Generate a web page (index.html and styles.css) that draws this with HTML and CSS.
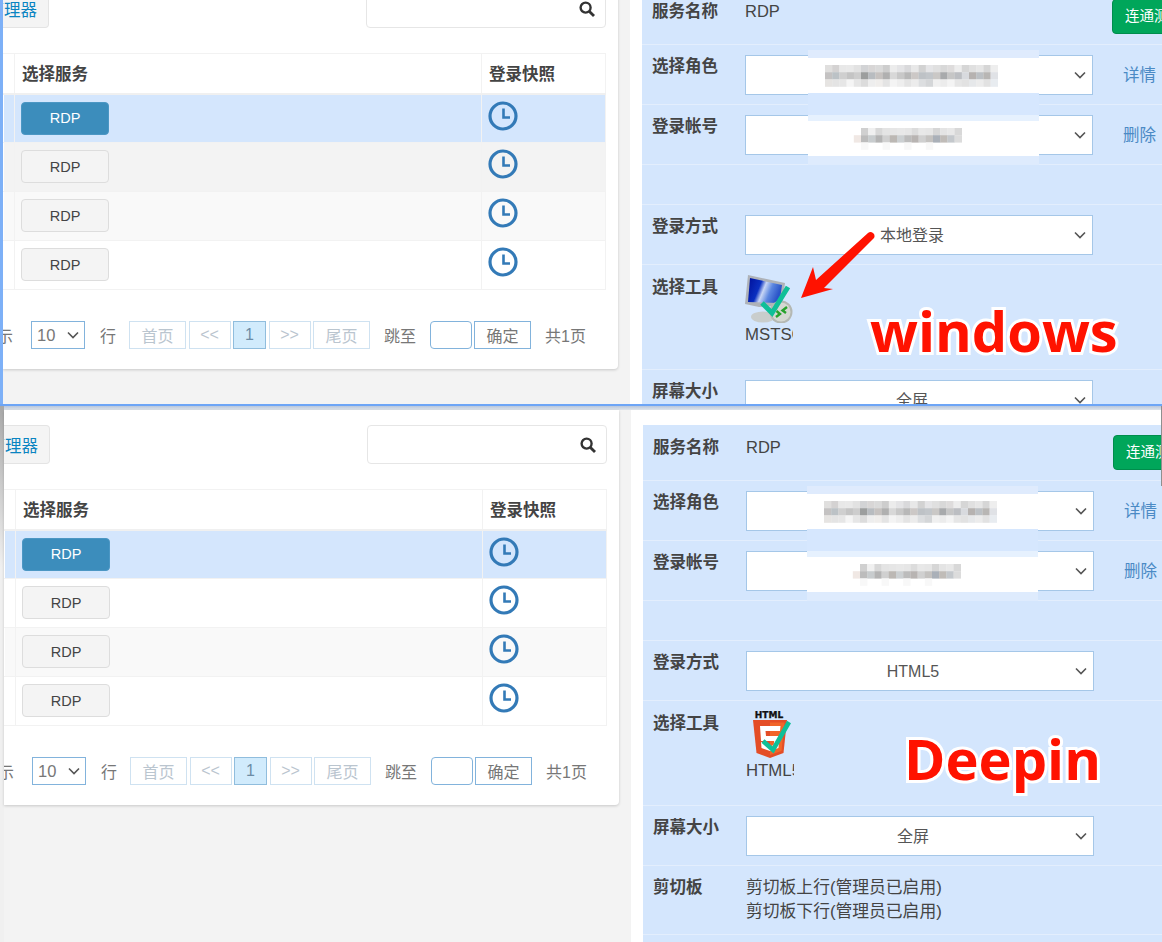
FILE: index.html
```html
<!DOCTYPE html>
<html lang="zh-CN">
<head>
    <meta charset="UTF-8">
    <meta name="viewport" content="width=device-width, initial-scale=1.0">
    <title>RDP 登录</title>
    <link rel="stylesheet" href="styles.css">
</head>
<body>

    <!-- shared icons -->
    <svg class="defs" aria-hidden="true">
        <symbol id="clock" viewBox="0 0 30 30">
            <circle cx="15" cy="15" r="13" fill="none" stroke="#337ab7" stroke-width="3.2"/>
            <path d="M15.5 7.5V16.5H22" fill="none" stroke="#337ab7" stroke-width="2.6"/>
        </symbol>
        <symbol id="search" viewBox="0 0 16 16">
            <circle cx="6.6" cy="6.6" r="5" fill="none" stroke="#333" stroke-width="2.4"/>
            <path d="M10.4 10.4L15 15" fill="none" stroke="#333" stroke-width="2.8"/>
        </symbol>
        <symbol id="patch" viewBox="0 0 231 115">
            <rect class="band" y="0" height="8" fill="#dfebfd"/>
            <rect class="band" y="8" height="35" fill="#fff"/>
            <rect class="band" y="43" height="22" fill="#d6e7fe"/>
            <rect class="band" y="65" height="6" fill="#e6f1fe"/>
            <rect class="band" y="71" height="35" fill="#fff"/>
            <rect class="band" y="106" height="9" fill="#deebfd"/>
            <g class="mosaic">
                <rect x="17" y="15" fill="#e0dfde"/><rect x="24.2" y="15" fill="#d4d2d2"/><rect x="31.4" y="15" fill="#e8e8e8"/><rect x="38.6" y="15" fill="#e9e9e9"/><rect x="45.8" y="15" fill="#e2e2e2"/><rect x="53" y="15" fill="#d2d3d5"/><rect x="60.2" y="15" fill="#d8d6d6"/><rect x="67.4" y="15" fill="#dadada"/><rect x="74.6" y="15" fill="#cdcdcd"/><rect x="81.8" y="15" fill="#ececec"/><rect x="89" y="15" fill="#e4e4e6"/><rect x="96.2" y="15" fill="#d9d9db"/><rect x="103.4" y="15" fill="#e8e8e8"/><rect x="110.6" y="15" fill="#d2d2d2"/><rect x="117.8" y="15" fill="#e5e5e7"/><rect x="125" y="15" fill="#e0e0e0"/><rect x="132.2" y="15" fill="#d8d8d8"/><rect x="139.4" y="15" fill="#dedcdc"/><rect x="146.6" y="15" fill="#ededed"/><rect x="153.8" y="15" fill="#d6d6d6"/><rect x="161" y="15" fill="#e0e0e0"/><rect x="168.2" y="15" fill="#e6e6e6"/><rect x="175.4" y="15" fill="#d6d6d6"/><rect x="182.6" y="15" fill="#eeeeee"/>
                <rect x="17" y="22.2" fill="#c4c2c2"/><rect x="24.2" y="22.2" fill="#bcc2c6"/><rect x="31.4" y="22.2" fill="#cfcfcf"/><rect x="38.6" y="22.2" fill="#c4c4c4"/><rect x="45.8" y="22.2" fill="#cdcdcd"/><rect x="53" y="22.2" fill="#9c9e9e"/><rect x="60.2" y="22.2" fill="#b8bcc0"/><rect x="67.4" y="22.2" fill="#c6c2c0"/><rect x="74.6" y="22.2" fill="#b0b0b0"/><rect x="81.8" y="22.2" fill="#d8d8d8"/><rect x="89" y="22.2" fill="#c8c8c8"/><rect x="96.2" y="22.2" fill="#b8b8b8"/><rect x="103.4" y="22.2" fill="#ccc8c6"/><rect x="110.6" y="22.2" fill="#bec2c6"/><rect x="117.8" y="22.2" fill="#c2c6ca"/><rect x="125" y="22.2" fill="#cac8c6"/><rect x="132.2" y="22.2" fill="#a8aaac"/><rect x="139.4" y="22.2" fill="#c6c6c6"/><rect x="146.6" y="22.2" fill="#bcbec2"/><rect x="153.8" y="22.2" fill="#d8dade"/><rect x="161" y="22.2" fill="#b6b2b0"/><rect x="168.2" y="22.2" fill="#bcc0c4"/><rect x="175.4" y="22.2" fill="#b8b6b4"/><rect x="182.6" y="22.2" fill="#e0e2e6"/>
                <rect x="17" y="29.4" fill="#e6e4e2"/><rect x="24.2" y="29.4" fill="#e4e4e4"/><rect x="31.4" y="29.4" fill="#e6e6e6"/><rect x="38.6" y="29.4" fill="#f5f5f5"/><rect x="45.8" y="29.4" fill="#e6e6e6"/><rect x="53" y="29.4" fill="#dcdcdc"/><rect x="60.2" y="29.4" fill="#eeeeee"/><rect x="67.4" y="29.4" fill="#f0eeec"/><rect x="74.6" y="29.4" fill="#e4e4e4"/><rect x="81.8" y="29.4" fill="#f4f4f4"/><rect x="89" y="29.4" fill="#eeeeee"/><rect x="96.2" y="29.4" fill="#e4e4e4"/><rect x="103.4" y="29.4" fill="#ececec"/><rect x="110.6" y="29.4" fill="#dcdee0"/><rect x="117.8" y="29.4" fill="#d4d6d8"/><rect x="125" y="29.4" fill="#f0f0f0"/><rect x="132.2" y="29.4" fill="#ececec"/><rect x="139.4" y="29.4" fill="#f4f4f4"/><rect x="146.6" y="29.4" fill="#e6e6e6"/><rect x="153.8" y="29.4" fill="#e2e2e2"/><rect x="161" y="29.4" fill="#e6e8ea"/><rect x="168.2" y="29.4" fill="#ececec"/><rect x="175.4" y="29.4" fill="#e2e2e2"/><rect x="182.6" y="29.4" fill="#e8ecf0"/>
                <rect x="53" y="78" fill="#d0d0d0"/><rect x="60.2" y="78" fill="#f0f0f0"/><rect x="67.4" y="78" fill="#d8d8d8"/><rect x="74.6" y="78" fill="#e4e4e4"/><rect x="81.8" y="78" fill="#e6e6e6"/><rect x="89" y="78" fill="#e8e8e8"/><rect x="96.2" y="78" fill="#e6e6e6"/><rect x="103.4" y="78" fill="#dcdcdc"/><rect x="110.6" y="78" fill="#e8e8e8"/><rect x="117.8" y="78" fill="#e6e6e6"/><rect x="125" y="78" fill="#d6d6d6"/><rect x="132.2" y="78" fill="#e4e4e4"/><rect x="139.4" y="78" fill="#e8e8e8"/><rect x="146.6" y="78" fill="#d8d8d8"/>
                <rect x="45.8" y="85.2" fill="#f0e8e4"/><rect x="53" y="85.2" fill="#bcbcbc"/><rect x="60.2" y="85.2" fill="#c8ccce"/><rect x="67.4" y="85.2" fill="#b4b4b4"/><rect x="74.6" y="85.2" fill="#d0d0d0"/><rect x="81.8" y="85.2" fill="#bcb8b4"/><rect x="89" y="85.2" fill="#ccd0d2"/><rect x="96.2" y="85.2" fill="#bcbcbc"/><rect x="103.4" y="85.2" fill="#b8b4b2"/><rect x="110.6" y="85.2" fill="#d0d0d0"/><rect x="117.8" y="85.2" fill="#c4c2c0"/><rect x="125" y="85.2" fill="#aab0b8"/><rect x="132.2" y="85.2" fill="#c0bcb8"/><rect x="139.4" y="85.2" fill="#c4c8cc"/><rect x="146.6" y="85.2" fill="#dcdcdc"/>
                <rect x="53" y="92.4" fill="#f8f8f8"/><rect x="74.6" y="92.4" fill="#f8f8f8"/><rect x="96.2" y="92.4" fill="#f8f8f8"/><rect x="117.8" y="92.4" fill="#f8f8f8"/>
            </g>
        </symbol>
    </svg>

    <!-- Windows screenshot -->
    <section class="shot shot-top">
        <div class="shot-inner">
            <div class="titlebar"></div>
            <div class="panes">
                <div class="left-pane">
                    <div class="toolbar">
                        <button class="file-btn">文件管理器</button>
                        <div class="search-box"><svg class="search-icon"><use href="#search"/></svg></div>
                    </div>
                    <table class="service-table">
                        <thead>
                            <tr><th class="col-check"></th><th>选择服务</th><th class="col-snap">登录快照</th></tr>
                        </thead>
                        <tbody>
                            <tr class="selected"><td></td><td><button class="rdp-btn active">RDP</button></td><td class="snap"><svg class="clock"><use href="#clock"/></svg></td></tr>
                            <tr class="grey"><td></td><td><button class="rdp-btn">RDP</button></td><td class="snap"><svg class="clock"><use href="#clock"/></svg></td></tr>
                            <tr class="stripe"><td></td><td><button class="rdp-btn">RDP</button></td><td class="snap"><svg class="clock"><use href="#clock"/></svg></td></tr>
                            <tr><td></td><td><button class="rdp-btn">RDP</button></td><td class="snap"><svg class="clock"><use href="#clock"/></svg></td></tr>
                        </tbody>
                    </table>
                    <div class="pager">
                        <span class="pager-text cut">显示</span>
                        <select class="page-size"><option>10</option></select>
                        <span class="pager-text row-word">行</span>
                        <a class="page-link wide off">首页</a>
                        <a class="page-link off">&lt;&lt;</a>
                        <a class="page-link num current">1</a>
                        <a class="page-link off">&gt;&gt;</a>
                        <a class="page-link wide off">尾页</a>
                        <span class="pager-text jump">跳至</span>
                        <input class="page-input" type="text">
                        <a class="page-link wide go">确定</a>
                        <span class="pager-text total">共1页</span>
                    </div>
                </div>
                <div class="right-pane">
                    <div class="form-card">
                        <div class="row row-name">
                            <div class="label">服务名称</div>
                            <div class="value name-value">RDP</div>
                            <button class="test-btn">连通测试</button>
                        </div>
                        <div class="row">
                            <div class="label">选择角色</div>
                            <select class="field"><option></option></select>
                            <a class="side-link">详情</a>
                        </div>
                        <div class="row">
                            <div class="label">登录帐号</div>
                            <select class="field"><option></option></select>
                            <a class="side-link">删除</a>
                        </div>
                        <div class="row row-empty"></div>
                        <div class="row">
                            <div class="label">登录方式</div>
                            <select class="field"><option>本地登录</option></select>
                        </div>
                        <div class="row row-tool">
                            <div class="label">选择工具</div>
                            <div class="tool">
                                <svg class="tool-icon" viewBox="0 0 48 48">
                                    <defs>
                                        <linearGradient id="screen" x1="0" y1="0" x2="1" y2="0.3">
                                            <stop offset="0" stop-color="#00109a"/>
                                            <stop offset="0.4" stop-color="#0a2fc0"/>
                                            <stop offset="0.55" stop-color="#c8d6f5"/>
                                            <stop offset="0.75" stop-color="#5b86e0"/>
                                            <stop offset="1" stop-color="#2a55c8"/>
                                        </linearGradient>
                                    </defs>
                                    <ellipse cx="18" cy="42" rx="12" ry="5.5" fill="#c9cdcc"/>
                                    <path d="M3 0L40 8L37 31L14 32L0 29Z" fill="#aeb2b8"/>
                                    <path d="M5 3L37 10L34.5 28L3 27Z" fill="url(#screen)"/>
                                    <circle cx="36" cy="37" r="11.5" fill="#b4b8b3"/>
                                    <circle cx="36" cy="37" r="9.5" fill="#d5d8d2"/>
                                    <path d="M31 42L35 39L31.5 36M42 32L37.5 35.5L41 38" fill="none" stroke="#27a22c" stroke-width="2.4"/>
                                    <path d="M17 28L27 38L43 12" fill="none" stroke="#0fbf98" stroke-width="5"/>
                                </svg>
                                <div class="tool-name">MSTSC</div>
                            </div>
                        </div>
                        <div class="row">
                            <div class="label">屏幕大小</div>
                            <select class="field"><option>全屏</option></select>
                        </div>
                        <svg class="patch patch-top"><use href="#patch"/></svg>
                        <svg class="arrow" viewBox="0 0 80 72">
                            <path d="M1 72L13 41L16 54L68 7A4 4 0 0 1 74 12L24 62L33 63Z" fill="#ff1200"/>
                        </svg>
                        <div class="os-word os-windows">windows</div>
                    </div>
                </div>
            </div>
        </div>
    </section>

    <!-- Deepin screenshot -->
    <section class="shot shot-bottom">
        <div class="shot-inner">
            <div class="titlebar"></div>
            <div class="panes">
                <div class="left-pane">
                    <div class="toolbar">
                        <button class="file-btn">文件管理器</button>
                        <div class="search-box"><svg class="search-icon"><use href="#search"/></svg></div>
                    </div>
                    <table class="service-table">
                        <thead>
                            <tr><th class="col-check"></th><th>选择服务</th><th class="col-snap">登录快照</th></tr>
                        </thead>
                        <tbody>
                            <tr class="selected"><td></td><td><button class="rdp-btn active">RDP</button></td><td class="snap"><svg class="clock"><use href="#clock"/></svg></td></tr>
                            <tr><td></td><td><button class="rdp-btn">RDP</button></td><td class="snap"><svg class="clock"><use href="#clock"/></svg></td></tr>
                            <tr class="stripe"><td></td><td><button class="rdp-btn">RDP</button></td><td class="snap"><svg class="clock"><use href="#clock"/></svg></td></tr>
                            <tr><td></td><td><button class="rdp-btn">RDP</button></td><td class="snap"><svg class="clock"><use href="#clock"/></svg></td></tr>
                        </tbody>
                    </table>
                    <div class="pager">
                        <span class="pager-text cut">显示</span>
                        <select class="page-size"><option>10</option></select>
                        <span class="pager-text row-word">行</span>
                        <a class="page-link wide off">首页</a>
                        <a class="page-link off">&lt;&lt;</a>
                        <a class="page-link num current">1</a>
                        <a class="page-link off">&gt;&gt;</a>
                        <a class="page-link wide off">尾页</a>
                        <span class="pager-text jump">跳至</span>
                        <input class="page-input" type="text">
                        <a class="page-link wide go">确定</a>
                        <span class="pager-text total">共1页</span>
                    </div>
                </div>
                <div class="right-pane">
                    <div class="form-card">
                        <div class="row row-name">
                            <div class="label">服务名称</div>
                            <div class="value name-value">RDP</div>
                            <button class="test-btn">连通测试</button>
                        </div>
                        <div class="row">
                            <div class="label">选择角色</div>
                            <select class="field"><option></option></select>
                            <a class="side-link">详情</a>
                        </div>
                        <div class="row">
                            <div class="label">登录帐号</div>
                            <select class="field"><option></option></select>
                            <a class="side-link">删除</a>
                        </div>
                        <div class="row row-empty"></div>
                        <div class="row">
                            <div class="label">登录方式</div>
                            <select class="field"><option>HTML5</option></select>
                        </div>
                        <div class="row row-tool">
                            <div class="label">选择工具</div>
                            <div class="tool">
                                <svg class="tool-icon" viewBox="0 0 48 48">
                                    <text class="html-word" x="23" y="7" text-anchor="middle">HTML</text>
                                    <path d="M7 9H41L37.5 42L24 47L10.5 42Z" fill="#e44d26"/>
                                    <path d="M24 11.5H38.5L35.5 40L24 44Z" fill="#f16529"/>
                                    <path d="M14 15H34.5L34 20H19.5L20 25H33.5L32.5 37L24 40L15.5 37L15 31H20L20.3 34L24 35.5L27.7 34L28.2 30H15Z" fill="#fff"/>
                                    <path d="M17 30L27 39L43 11" fill="none" stroke="#0fbf98" stroke-width="4.6"/>
                                </svg>
                                <div class="tool-name">HTML5</div>
                            </div>
                        </div>
                        <div class="row">
                            <div class="label">屏幕大小</div>
                            <select class="field"><option>全屏</option></select>
                        </div>
                        <div class="row row-clip">
                            <div class="label">剪切板</div>
                            <div class="value clip-value">
                                <div>剪切板上行(管理员已启用)</div>
                                <div>剪切板下行(管理员已启用)</div>
                            </div>
                        </div>
                        <svg class="patch patch-bottom"><use href="#patch"/></svg>
                        <div class="os-word os-deepin">Deepin</div>
                    </div>
                </div>
            </div>
        </div>
    </section>

</body>
</html>
```

FILE: styles.css
```css
* {
    box-sizing: border-box;
}

html, body {
    margin: 0;
    padding: 0;
    height: 942px;
    overflow: hidden;
}

body {
    font-family: "Liberation Sans", "Noto Sans CJK SC", sans-serif;
    font-size: 16px;
    color: #444;
    background-color: #f3f3f3;
}

.defs {
    position: absolute;
    width: 0;
    height: 0;
}

.band {
    width: 231px;
}

.mosaic {
    filter: blur(0.4px);
}

.mosaic rect {
    width: 7.4px;
    height: 7.4px;
}

/* One pasted screenshot */
.shot {
    overflow: hidden;
    background-color: #f3f3f3;
}

.shot-inner {
    background-color: #f3f3f3;
}

.shot-top {
    height: 404px;
    border-left: 3px solid #7db0f7;
}

.shot-top .shot-inner {
    margin-top: -30px;
}

.shot-bottom {
    position: relative;
    height: 538px;
    padding-left: 4px;
    border-top: 2px solid #6da5f6;
    background: linear-gradient(#a8a8a8, #f0f0f0 30%);
}

/* thin dark edge of the pasted picture */
.shot-bottom::after {
    content: "";
    position: absolute;
    right: 0;
    top: 0;
    width: 1px;
    height: 80px;
    background-color: #8f8f8f;
}

.shot-bottom .shot-inner {
    height: 100%;
}

.titlebar {
    height: 4px;
    background: linear-gradient(#b9c7dc, #dfe4ea);
}

.panes {
    display: flex;
    width: 1200px;
}

/* Left side: service table */
.left-pane {
    width: 615px;
    height: 395px;
    padding: 15px 12px 0 0;
    background-color: #fff;
    border-radius: 0 0 4px 0;
    box-shadow: 0 1px 3px rgba(0, 0, 0, 0.18);
}

.toolbar {
    display: flex;
    justify-content: space-between;
    height: 39px;
}

.file-btn {
    display: flex;
    justify-content: flex-end;
    align-items: center;
    width: 46px;
    height: 39px;
    padding: 0 11px 0 0;
    overflow: hidden;
    white-space: nowrap;
    font-family: inherit;
    font-size: 16.5px;
    color: #0a84c1;
    background-color: #f4f4f4;
    border: 1px solid #e4e4e4;
    border-left: none;
    border-radius: 0 4px 4px 0;
}

.search-box {
    display: flex;
    justify-content: flex-end;
    align-items: center;
    width: 240px;
    height: 39px;
    padding-right: 10px;
    border: 1px solid #e6e6e6;
    border-radius: 4px;
}

.search-icon {
    width: 16px;
    height: 16px;
}

.service-table {
    width: 603px;
    margin-top: 25px;
    border-collapse: collapse;
    table-layout: fixed;
}

.service-table th {
    height: 40px;
    padding: 0 7px;
    text-align: left;
    font-size: 16.5px;
    font-weight: bold;
    color: #444;
    border: 1px solid #f2f2f2;
    border-left-color: transparent;
    border-bottom: 2px solid #f0f0f0;
}

.service-table th.col-check {
    width: 11px;
    padding: 0;
}

.col-snap {
    width: 124px;
}

.service-table td {
    height: 49px;
    padding: 0 6px;
    vertical-align: top;
    border: 1px solid #f2f2f2;
    border-left-color: transparent;
}

.service-table td:first-child {
    padding: 0;
}

.selected td {
    background-color: #d4e6fd;
}

.grey td {
    background-color: #f3f3f3;
}

.stripe td {
    background-color: #f9f9f9;
}

.rdp-btn {
    display: block;
    width: 88px;
    height: 33px;
    margin-top: 7px;
    font-family: inherit;
    font-size: 14.5px;
    color: #444;
    background-color: #f4f4f4;
    border: 1px solid #ddd;
    border-radius: 4px;
}

.rdp-btn.active {
    color: #fff;
    background-color: #3c8dbc;
    border-color: #4c97c4;
}

.clock {
    display: block;
    width: 30px;
    height: 30px;
    margin-top: 6px;
}

.service-table .snap {
    padding-left: 6px;
}

/* Pagination */
.pager {
    display: flex;
    align-items: center;
    height: 30px;
    margin-top: 30px;
    font-size: 16px;
    color: #777;
}

.pager-text {
    white-space: nowrap;
}

.cut {
    width: 10px;
    margin-right: 18px;
    display: flex;
    justify-content: flex-end;
    overflow: hidden;
}

.page-size {
    appearance: none;
    width: 54px;
    height: 28px;
    padding-left: 5px;
    font-family: inherit;
    font-size: 16.5px;
    color: #777;
    background: #fff url("data:image/svg+xml,%3Csvg xmlns='http://www.w3.org/2000/svg' width='12' height='8'%3E%3Cpath d='M1 1.5L6 6.5L11 1.5' fill='none' stroke='%23555' stroke-width='1.6'/%3E%3C/svg%3E") no-repeat right 5px center;
    border: 1px solid #82b3dc;
}

.row-word {
    margin: 0 13px 0 15px;
}

.page-link {
    display: flex;
    justify-content: center;
    align-items: center;
    width: 42px;
    height: 28px;
    margin-right: 2.5px;
    border: 1px solid #cfe2f1;
}

.page-link.wide {
    width: 57px;
}

.page-link.num {
    width: 33px;
}

.page-link.off {
    color: #bac5cf;
}

.page-link.current {
    color: #6d8ca5;
    background-color: #d1ebfc;
    border-color: #90bddd;
}

.page-link.go {
    margin-right: 0;
    color: #777;
    border-color: #82b3dc;
}

.jump {
    margin: 0 14px 0 11.5px;
}

.page-input {
    width: 42px;
    height: 28px;
    margin-right: 2px;
    background-color: #fff;
    border: 1px solid #82b3dc;
    border-radius: 4px;
}

.total {
    margin-left: 14px;
}

/* Right side: login form */
.right-pane {
    width: 543px;
    margin-left: 12px;
    height: 600px;
    padding: 15px 0 0 12px;
    background-color: #fff;
}

.form-card {
    position: relative;
    height: 600px;
    background-color: #d4e6fd;
}

.row {
    display: flex;
    align-items: flex-start;
    height: 60px;
    padding: 10px 0 0 10px;
    border-bottom: 1px solid #e3eefd;
}

.row-name {
    height: 56px;
    padding-top: 11px;
}

.row-empty {
    height: 40px;
}

.row-tool {
    height: 105px;
}

.row-clip {
    height: 69px;
}

.label {
    flex-shrink: 0;
    width: 93px;
    line-height: 22px;
    font-size: 16.5px;
    font-weight: bold;
    color: #444;
}

.row-tool .label {
    padding-top: 1px;
}

.value {
    line-height: 24px;
    font-size: 16.5px;
    color: #444;
}

.clip-value {
    font-size: 16.8px;
}

.name-value {
    width: 367px;
    flex-shrink: 0;
    line-height: 22px;
}

.test-btn {
    flex-shrink: 0;
    width: 100px;
    height: 35px;
    margin-top: -1px;
    padding: 0 0 5px 12px;
    text-align: left;
    font-family: inherit;
    font-size: 14.5px;
    color: #fff;
    background-color: #00a65a;
    border: 1px solid #008d4c;
    border-radius: 4px;
}

.field {
    appearance: none;
    flex-shrink: 0;
    width: 348px;
    height: 40px;
    padding: 0 14px 0 0;
    text-align: center;
    font-family: inherit;
    font-size: 16px;
    color: #555;
    background: #fff url("data:image/svg+xml,%3Csvg xmlns='http://www.w3.org/2000/svg' width='12' height='8'%3E%3Cpath d='M1 1.5L6 6.5L11 1.5' fill='none' stroke='%23555' stroke-width='1.6'/%3E%3C/svg%3E") no-repeat right 6px center;
    border: 1px solid #a5c7e8;
}

.side-link {
    margin: 8px 0 0 30px;
    line-height: 24px;
    font-size: 16.5px;
    color: #4b8ac5;
}

.tool {
    width: 48px;
}

.tool-icon {
    display: block;
    width: 48px;
    height: 48px;
}

.html-word {
    font-family: "DejaVu Sans", sans-serif;
    font-size: 9px;
    font-weight: bold;
    fill: #111;
    stroke: #111;
    stroke-width: 0.3px;
}

.tool-name {
    overflow: hidden;
    white-space: nowrap;
    line-height: 24px;
    font-size: 16.8px;
    color: #444;
}

/* Things pasted on top of the screenshot */
.patch {
    position: absolute;
    top: 61px;
    width: 231px;
    height: 115px;
}

.patch-top {
    left: 166px;
}

.patch-bottom {
    left: 164px;
}

.arrow {
    position: absolute;
    left: 158px;
    top: 237px;
    width: 80px;
    height: 72px;
}

.os-word {
    position: absolute;
    font-family: "Open Sans", sans-serif;
    font-size: 56px;
    font-weight: 700;
    line-height: 70px;
    color: #ff1200;
    paint-order: stroke fill;
    -webkit-text-stroke: 6px #fff;
}

.os-windows {
    left: 228px;
    top: 306px;
}

.os-deepin {
    left: 261px;
    top: 298px;
}
```
